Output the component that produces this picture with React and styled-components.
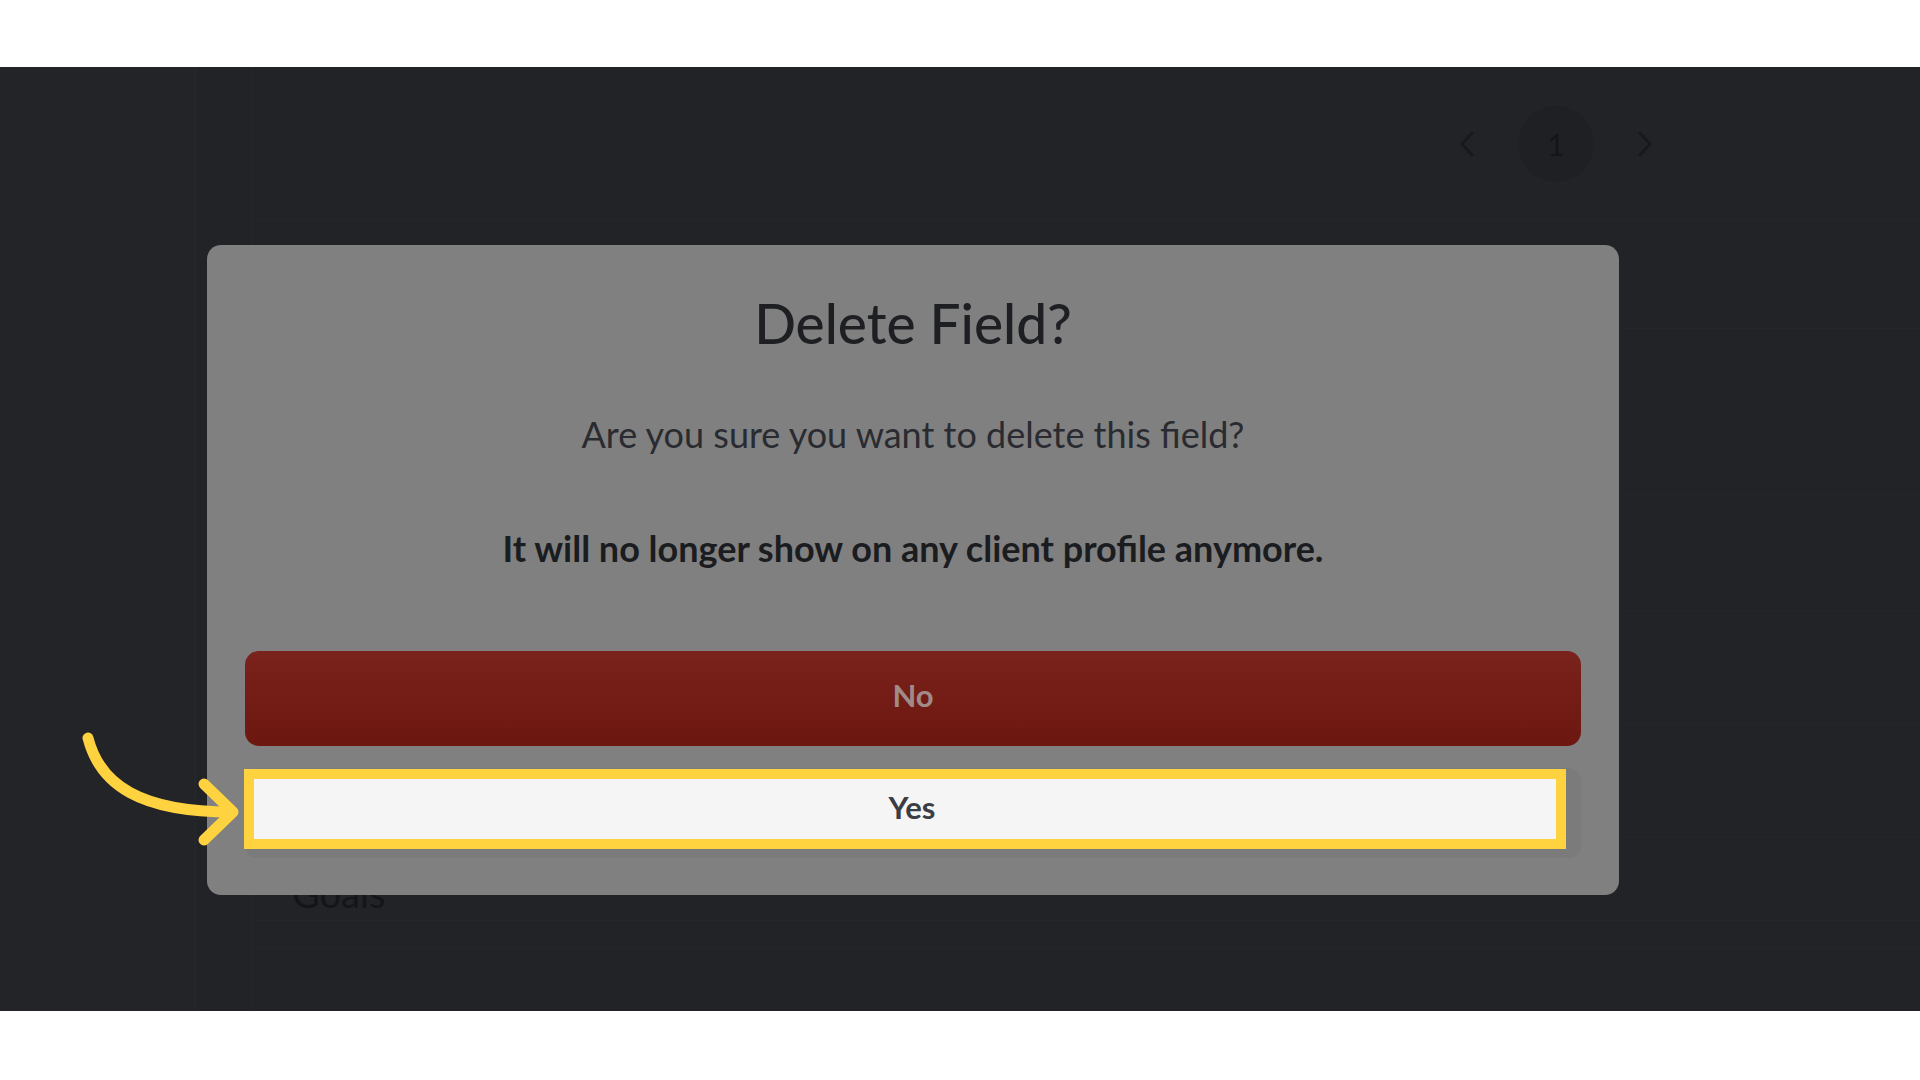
import React from "react";
import styled, { createGlobalStyle } from "styled-components";

const GlobalStyle = createGlobalStyle`
  html, body {
    margin: 0;
    padding: 0;
    background: #ffffff;
  }
  body {
    font-family: Lato, "Noto Sans", "Liberation Sans", sans-serif;
  }
`;

const Frame = styled.div`
  width: 1920px;
  height: 1080px;
  display: flex;
  flex-direction: column;
  background: #ffffff;
  overflow: hidden;
`;

const Band = styled.div`
  flex: 0 0 ${props => props.$height}px;
  background: #ffffff;
`;

const Screen = styled.div`
  position: relative;
  flex: 1;
  display: flex;
  background: #222327;
  overflow: hidden;
`;

const Sidebar = styled.aside`
  flex: 0 0 195px;
  background: #232428;
  border-right: 1px solid #26272b;
`;

const Rail = styled.div`
  flex: 0 0 55px;
  border-right: 1px solid #25262a;
`;

const Main = styled.main`
  flex: 1;
  display: flex;
  flex-direction: column;
`;

const PagerBar = styled.div`
  flex: 0 0 153px;
  display: flex;
  align-items: center;
  justify-content: flex-end;
  gap: 44px;
  padding-right: 268px;
  border-bottom: 1px solid #25262a;
`;

const PageDot = styled.div`
  width: 76px;
  height: 76px;
  border-radius: 50%;
  background: #1f2023;
  display: flex;
  align-items: center;
  justify-content: center;
  color: #141518;
  font-size: 30px;
`;

const Row = styled.div`
  flex: 0 0 ${props => props.$height}px;
  display: flex;
  align-items: flex-end;
  padding: 0 40px 4px;
  border-bottom: 1px solid #25262a;
  color: #141518;
  font-size: 38px;
  box-sizing: border-box;
`;

const Modal = styled.div`
  position: absolute;
  left: 207px;
  top: 178px;
  width: 1412px;
  height: 650px;
  box-sizing: border-box;
  padding: 46px 38px 38px;
  border-radius: 14px;
  background: #808080;
  display: flex;
  flex-direction: column;
  align-items: center;
`;

const Title = styled.h2`
  margin: 0;
  font-size: 55px;
  line-height: 65px;
  font-weight: 500;
  color: #1e1f23;
`;

const Message = styled.p`
  margin: ${props => props.$gap}px 0 0;
  font-size: 36px;
  line-height: 40px;
  font-weight: ${props => (props.$strong ? 700 : 400)};
  color: ${props => (props.$strong ? "#1b1c20" : "#2a2b30")};
`;

const NoButton = styled.button`
  margin-top: 83px;
  width: 100%;
  height: 95px;
  flex-shrink: 0;
  padding: 0 0 8px;
  border: none;
  border-radius: 14px;
  background: linear-gradient(#7a221c, #6d1711);
  color: #a08b89;
  font-family: inherit;
  font-size: 31px;
  font-weight: 700;
`;

const YesButton = styled.div`
  position: relative;
  margin-top: 22px;
  width: 100%;
  height: 90px;
  flex-shrink: 0;
  border-radius: 12px;
  background: #7b7b7b;
`;

const Spotlight = styled.div`
  position: absolute;
  left: -1px;
  top: 1px;
  width: 1322px;
  height: 80px;
  box-sizing: border-box;
  border: 10px solid #ffd23f;
  background: #f5f5f5;
  display: flex;
  align-items: center;
  justify-content: center;
  padding: 0 0 4px 14px;
  color: #3a3d43;
  font-size: 31px;
  font-weight: 700;
`;

const Pointer = styled.svg`
  position: absolute;
  left: 70px;
  top: 663px;
  width: 180px;
  height: 130px;
`;

const Chevron = ({ flip }) => (
  <svg width="14" height="26" viewBox="0 0 14 26">
    <polyline
      points={flip ? "2,2 12,13 2,24" : "12,2 2,13 12,24"}
      fill="none"
      stroke="#18191c"
      strokeWidth="3"
      strokeLinecap="round"
      strokeLinejoin="round"
    />
  </svg>
);

const rows = [108, 166, 116, 113, 114, 83, 28, 120];

export default function App() {
  return (
    <>
      <GlobalStyle />
      <Frame>
        <Band $height={67} />
        <Screen>
          <Sidebar />
          <Rail />
          <Main>
            <PagerBar>
              <Chevron />
              <PageDot>1</PageDot>
              <Chevron flip />
            </PagerBar>
            {rows.map((h, i) => (
              <Row key={i} $height={h}>
                {i === 5 ? "Goals" : ""}
              </Row>
            ))}
          </Main>

          <Modal>
            <Title>Delete Field?</Title>
            <Message $gap={58}>Are you sure you want to delete this field?</Message>
            <Message $gap={74} $strong>
              It will no longer show on any client profile anymore.
            </Message>
            <NoButton>No</NoButton>
            <YesButton>
              <Spotlight>Yes</Spotlight>
            </YesButton>
          </Modal>

          <Pointer viewBox="70 730 180 130">
            <path
              d="M88 738 C 100 785, 140 812, 232 812"
              fill="none"
              stroke="#ffd23f"
              strokeWidth="11"
              strokeLinecap="round"
            />
            <path
              d="M204 784 L233 812 L204 840"
              fill="none"
              stroke="#ffd23f"
              strokeWidth="11"
              strokeLinecap="round"
              strokeLinejoin="round"
            />
          </Pointer>
        </Screen>
        <Band $height={69} />
      </Frame>
    </>
  );
}
